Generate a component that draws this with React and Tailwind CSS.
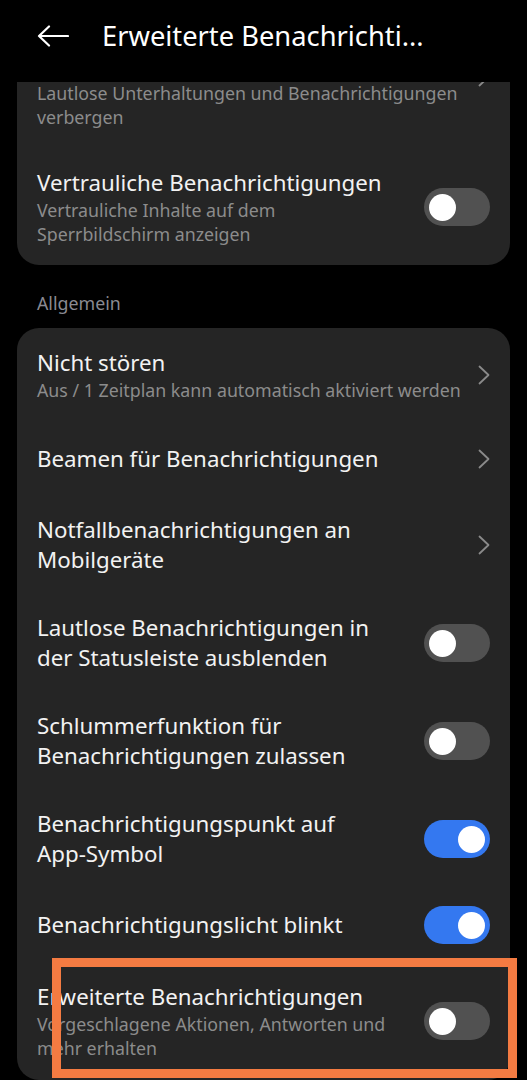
import React from "react";

const font = { fontFamily: '"Noto Sans", "Roboto", "Liberation Sans", sans-serif' };

function Chevron() {
  return (
    <svg width="12" height="20" viewBox="0 0 12 20" className="shrink-0">
      <path d="M1.5 1.5 L10.5 10 L1.5 18.5" fill="none" stroke="#8a8a8a" strokeWidth="1.8" strokeLinecap="round" strokeLinejoin="round" />
    </svg>
  );
}

function Toggle({ on }) {
  return (
    <div
      className={
        "relative shrink-0 w-[66px] h-[38px] rounded-full flex items-center px-[5px] " +
        (on ? "bg-[#3478f0] justify-end" : "bg-[#515151] justify-start")
      }
    >
      <div className="w-[27px] h-[27px] rounded-full bg-white" />
    </div>
  );
}

function Row({ title, sub, right, py = "py-[19px]" }) {
  return (
    <div className={"flex items-center pl-5 pr-5 gap-4 " + py}>
      <div className="flex-1 min-w-0">
        {title.map((t, i) => (
          <div key={i} className="text-[22.3px] leading-[30px] text-[#f2f2f2] whitespace-nowrap">{t}</div>
        ))}
        {sub &&
          sub.map((s, i) => (
            <div key={i} className="text-[17.8px] leading-[24px] text-[#8c8c8c] whitespace-nowrap">{s}</div>
          ))}
      </div>
      {right}
    </div>
  );
}

export default function App() {
  return (
    <div className="w-[527px] h-[1080px] bg-black overflow-hidden relative" style={font}>
      {/* Header */}
      <div className="h-[82px] flex items-center pb-[10px] pl-[37px]">
        <svg width="32" height="22" viewBox="0 0 32 22" className="shrink-0">
          <path d="M2 11 H31 M12 1.5 L2 11 L12 20.5" fill="none" stroke="#ffffff" strokeWidth="2.2" strokeLinecap="round" strokeLinejoin="round" />
        </svg>
        <div className="ml-[33px] text-[27.3px] leading-[36px] text-white whitespace-nowrap">Erweiterte Benachrichti...</div>
      </div>

      {/* Clipped first card */}
      <div className="h-[183px] overflow-hidden">
        <div className="mx-[17px] mt-[-50px] bg-[#252525] rounded-[22px]">
          <Row
            title={["Sperrbildschirm"]}
            sub={["Lautlose Unterhaltungen und Benachrichtigungen", "verbergen"]}
            right={<div className="self-start mt-[16px]"><Chevron /></div>}
            py="pt-[19px] pb-[20px]"
          />
          <Row
            title={["Vertrauliche Benachrichtigungen"]}
            sub={["Vertrauliche Inhalte auf dem", "Sperrbildschirm anzeigen"]}
            right={<Toggle on={false} />}
            py="pt-[19px] pb-[19px]"
          />
        </div>
      </div>

      <div className="pl-[37px] pt-[25px] pb-[12px] text-[17.8px] leading-[26px] text-[#8a8a92]">Allgemein</div>

      <div className="mx-[17px] bg-[#252525] rounded-[22px]">
        <Row
          title={["Nicht stören"]}
          sub={["Aus / 1 Zeitplan kann automatisch aktiviert werden"]}
          right={<Chevron />}
          py="pt-[20px] pb-[20px]"
        />
        <Row title={["Beamen für Benachrichtigungen"]} right={<Chevron />} py="py-[22px]" />
        <Row title={["Notfallbenachrichtigungen an", "Mobilgeräte"]} right={<Chevron />} />
        <Row title={["Lautlose Benachrichtigungen in", "der Statusleiste ausblenden"]} right={<Toggle on={false} />} />
        <Row title={["Schlummerfunktion für", "Benachrichtigungen zulassen"]} right={<Toggle on={false} />} />
        <Row title={["Benachrichtigungspunkt auf", "App-Symbol"]} right={<Toggle on={true} />} />
        <Row title={["Benachrichtigungslicht blinkt"]} right={<Toggle on={true} />} py="pt-[18px] pb-[20px]" />
        <Row
          title={["Erweiterte Benachrichtigungen"]}
          sub={["Vorgeschlagene Aktionen, Antworten und", "mehr erhalten"]}
          right={<Toggle on={false} />}
          py="pt-[18px] pb-[20px]"
        />
      </div>

      {/* Highlight box overlay */}
      <div className="absolute left-[52px] top-[958px] w-[465px] h-[120px] border-[9px] border-[#f47b42]" />
    </div>
  );
}
